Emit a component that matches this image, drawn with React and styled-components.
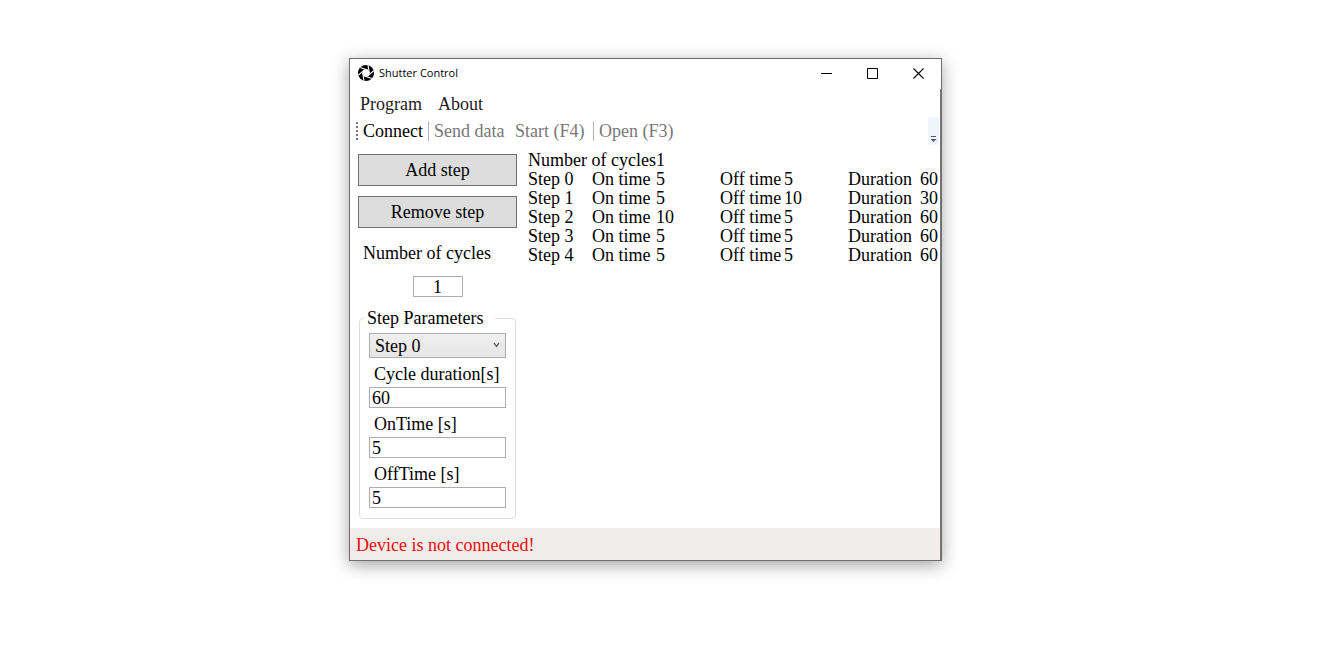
import React, { useState } from "react";
import styled, { createGlobalStyle } from "styled-components";

const GlobalStyle = createGlobalStyle`
  *, *::before, *::after { box-sizing: border-box; }
  body {
    margin: 0;
    background: #fff;
    color: #000;
    font-family: "Century Schoolbook", "Liberation Serif", serif;
    font-size: 18px;
    line-height: 20px;
  }
  button, input, select { font: inherit; color: inherit; margin: 0; border-radius: 0; }
`;

const Desktop = styled.main`
  padding: 58px 378px 90px 349px;
`;

const Window = styled.section`
  min-width: 593px;
  background: #fff;
  border: 1px solid #6e6e6e;
  box-shadow: 0 4px 16px rgba(0, 0, 0, 0.36);
`;

const TitleBar = styled.header`
  display: flex;
  align-items: center;
  height: 30px;
  padding: 0 0 2px 8px;
`;

const Title = styled.h1`
  flex: 1;
  margin: 0 0 0 5px;
  font: 400 11px/16px "Open Sans", "Noto Sans", sans-serif;
`;

const CaptionButton = styled.button`
  display: flex;
  align-items: center;
  justify-content: center;
  width: 46px;
  height: 28px;
  padding: 0;
  border: 0;
  background: none;
`;

const Client = styled.div`
  border-right: 1px solid #777;
`;

const MenuBar = styled.nav`
  display: flex;
  gap: 14px;
  height: 28px;
  align-items: center;
  padding: 1px 0 0 10px;
`;

const MenuItem = styled.button`
  min-width: ${(p) => p.$width}px;
  padding: 0;
  border: 0;
  background: none;
  color: #212121;
  text-align: left;
`;

const ToolBar = styled.div`
  display: flex;
  align-items: center;
  height: 28px;
  padding-left: 6px;
`;

const Grip = styled.span`
  width: 2px;
  height: 18px;
  margin-right: 5px;
  background: repeating-linear-gradient(#777 0 2px, transparent 2px 4px);
`;

const ToolButton = styled.button`
  min-width: ${(p) => p.$width}px;
  padding: 0;
  border: 0;
  background: none;
  text-align: left;
  white-space: nowrap;
  &:disabled { color: #787878; }
  & + & { margin-left: 6px; }
`;

const Separator = styled.span`
  width: 1px;
  height: 20px;
  margin: 0 5px;
  background: #b4b4b4;
`;

const Overflow = styled.button`
  display: flex;
  align-items: flex-end;
  justify-content: center;
  width: 11px;
  height: 28px;
  margin-left: auto;
  margin-right: 1px;
  padding: 0 0 3px;
  border: 0;
  background: #eef5fd;
`;

const Body = styled.div`
  display: flex;
  align-items: flex-start;
  padding: 5px 0 9px 8px;
  gap: 11px;
`;

const Controls = styled.form`
  display: flex;
  flex-direction: column;
  flex: none;
  width: 159px;
  padding-top: 4px;
`;

const StepButton = styled.button`
  height: 32px;
  margin-bottom: 10px;
  padding: 0;
  background: #ddd;
  border: 1px solid #707070;
`;

const CyclesLabel = styled.label`
  margin: 5px 0 13px 5px;
`;

const TextBox = styled.input`
  display: block;
  width: ${(p) => p.$width || "100%"};
  height: 21px;
  padding: 1px 2px 0;
  border: 1px solid #abadb3;
  background: #fff;
  align-self: center;
  text-align: ${(p) => p.$align || "left"};
`;

const Group = styled.fieldset`
  min-width: 0;
  margin: 11px 1px 0;
  padding: 5px 9px 10px;
  border: 1px solid #dcdfe0;
  border-radius: 4px;
`;

const Legend = styled.legend`
  margin-left: -5px;
  padding: 0 12px 0 3px;
`;

const SelectWrap = styled.div`
  position: relative;
`;

const Select = styled.select`
  display: block;
  appearance: none;
  width: 100%;
  height: 25px;
  padding: 0 20px 0 5px;
  border: 1px solid #acacac;
  background: linear-gradient(#f0f0f0, #e5e5e5);
`;

const Chevron = styled.svg`
  position: absolute;
  top: 9px;
  right: 6px;
  pointer-events: none;
`;

const FieldLabel = styled.label`
  display: block;
  padding: 6px 0 3px 5px;
`;

const Program = styled.table`
  border-collapse: collapse;
  table-layout: fixed;
  width: 411px;
  margin-top: 1px;
  td, th {
    padding: 0;
    height: 19px;
    line-height: 19px;
    font-weight: 400;
    text-align: left;
    white-space: nowrap;
  }
`;

const Col = styled.col`
  width: ${(p) => p.$width}px;
`;

const StatusBar = styled.footer`
  height: 32px;
  padding: 7px 6px 5px;
  background: #f1eded;
  color: #f00a0a;
`;

const steps = [
  { on: 5, off: 5, duration: 60 },
  { on: 5, off: 10, duration: 30 },
  { on: 10, off: 5, duration: 60 },
  { on: 5, off: 5, duration: 60 },
  { on: 5, off: 5, duration: 60 },
];

const blades = [0, 60, 120, 180, 240, 300];

function ShutterIcon() {
  return (
    <svg width="16" height="16" viewBox="0 0 16 16" aria-hidden="true">
      <circle cx="8" cy="8" r="8" fill="#000" />
      <path d="M6 4.5H10L12 8L10 11.5H6L4 8Z" fill="#fff" />
      {blades.map((angle) => (
        <path
          key={angle}
          d="M9.5 5 L2.2 2.4"
          stroke="#fff"
          strokeWidth="1.1"
          transform={`rotate(${angle} 8 8)`}
        />
      ))}
    </svg>
  );
}

function Field({ id, label, value, onChange }) {
  return (
    <>
      <FieldLabel htmlFor={id}>{label}</FieldLabel>
      <TextBox id={id} value={value} onChange={(e) => onChange(e.target.value)} />
    </>
  );
}

export default function App() {
  const [cycles, setCycles] = useState("1");
  const [duration, setDuration] = useState("60");
  const [onTime, setOnTime] = useState("5");
  const [offTime, setOffTime] = useState("5");

  return (
    <>
      <GlobalStyle />
      <Desktop>
        <Window>
          <TitleBar>
            <ShutterIcon />
            <Title>Shutter Control</Title>
            <CaptionButton aria-label="Minimize">
              <svg width="11" height="11"><path d="M0 5.5H11" stroke="#000" /></svg>
            </CaptionButton>
            <CaptionButton aria-label="Maximize">
              <svg width="11" height="11"><path d="M.5 .5H10.5V10.5H.5Z" fill="none" stroke="#000" /></svg>
            </CaptionButton>
            <CaptionButton aria-label="Close">
              <svg width="11" height="11"><path d="M.5 .5L10.5 10.5M10.5 .5L.5 10.5" stroke="#000" strokeWidth="1.1" /></svg>
            </CaptionButton>
          </TitleBar>
          <Client>
            <MenuBar>
              <MenuItem $width={64}>Program</MenuItem>
              <MenuItem $width={45}>About</MenuItem>
            </MenuBar>
            <ToolBar role="toolbar">
              <Grip />
              <ToolButton $width={60}>Connect</ToolButton>
              <Separator />
              <ToolButton $width={75} disabled>Send data</ToolButton>
              <ToolButton $width={73} disabled>Start (F4)</ToolButton>
              <Separator />
              <ToolButton $width={74} disabled>Open (F3)</ToolButton>
              <Overflow aria-label="More tools">
                <svg width="7" height="6"><path d="M1 .5H6" stroke="#555" /><path d="M.5 3H6.5L3.5 6Z" fill="#555" /></svg>
              </Overflow>
            </ToolBar>
            <Body>
              <Controls onSubmit={(e) => e.preventDefault()}>
                <StepButton type="button">Add step</StepButton>
                <StepButton type="button">Remove step</StepButton>
                <CyclesLabel htmlFor="cycles">Number of cycles</CyclesLabel>
                <TextBox id="cycles" $width="50px" $align="center" value={cycles} onChange={(e) => setCycles(e.target.value)} />
                <Group>
                  <Legend>Step Parameters</Legend>
                  <SelectWrap>
                    <Select aria-label="Step" defaultValue="0">
                      {steps.map((_, i) => <option key={i} value={i}>Step {i}</option>)}
                    </Select>
                    <Chevron width="7" height="6"><path d="M1 1L3.5 4.5L6 1" fill="none" stroke="#606060" strokeWidth="1.3" /></Chevron>
                  </SelectWrap>
                  <Field id="duration" label="Cycle duration[s]" value={duration} onChange={setDuration} />
                  <Field id="on-time" label="OnTime [s]" value={onTime} onChange={setOnTime} />
                  <Field id="off-time" label="OffTime [s]" value={offTime} onChange={setOffTime} />
                </Group>
              </Controls>
              <Program>
                <colgroup>
                  {[64, 64, 64, 64, 64, 72, 19].map((w, i) => <Col key={i} $width={w} />)}
                </colgroup>
                <tbody>
                  <tr>
                    <th colSpan={2} scope="row">Number of cycles</th>
                    <td>1</td>
                  </tr>
                  {steps.map((s, i) => (
                    <tr key={i}>
                      <th scope="row">Step {i}</th>
                      <td>On time</td>
                      <td>{s.on}</td>
                      <td>Off time</td>
                      <td>{s.off}</td>
                      <td>Duration</td>
                      <td>{s.duration}</td>
                    </tr>
                  ))}
                </tbody>
              </Program>
            </Body>
            <StatusBar role="status">Device is not connected!</StatusBar>
          </Client>
        </Window>
      </Desktop>
    </>
  );
}
